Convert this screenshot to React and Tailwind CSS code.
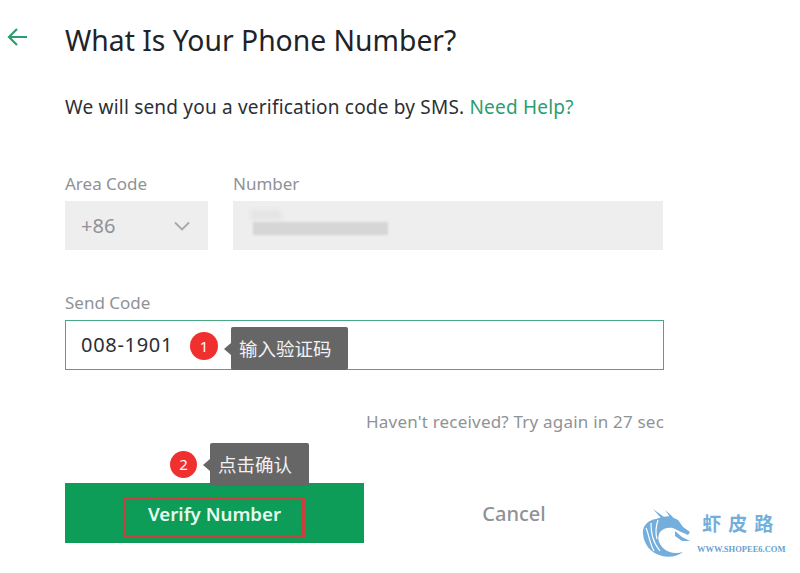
const font = { fontFamily: '"Noto Sans", "Noto Sans CJK SC", sans-serif' };

function Dragon() {
  return (
    <svg width="50" height="50" viewBox="0 0 50 50" className="shrink-0">
      <g fill="#74aedc">
        <path d="M14 11 C6 12 0 18 1 26 C2 36 8 45 20 48 C28 50 36 48 41 44 C34 46 26 45 21 40 C16 35 15 29 18 24 C21 20 27 19 31 20 L37 23 L46 27 L48 24 L41 19 L36 12 L28 8 L20 9 Z" />
        <path d="M11 1 L22 9 L19 10 Z" />
        <path d="M23 2 L31 9 L28 9 Z" />
        <path d="M33 23 L40 29 L48 33 L40 33 L33 28 Z" />
      </g>
      <g fill="none" stroke="#ffffff" strokeWidth="1.2">
        <path d="M4 20 C7 26 7 34 12 43" />
        <path d="M9 15 C9 24 10 33 18 43" />
        <path d="M16 12 C14 18 13 24 15 31" />
      </g>
    </svg>
  );
}

function Tip({ width, children }) {
  return (
    <div className="flex items-center ml-[6px]">
      <span className="w-0 h-0 border-y-[6px] border-y-transparent border-r-[7px] border-r-[#666666]" />
      <div className={`${width} h-[43px] rounded-[2px] bg-[#666666] text-[#f2f2f2] text-[18.5px] tracking-normal flex items-center pl-[8px]`}>
        {children}
      </div>
    </div>
  );
}

export default function App() {
  return (
    <div style={font} className="relative w-[800px] h-[573px] overflow-hidden bg-white flex gap-[36px] pl-[7px] pt-[20px]">
      <svg width="22" height="20" viewBox="0 0 22 20" fill="none" stroke="#2c9d70" strokeWidth="2.2" className="mt-[7px] shrink-0">
        <path d="M20 10H2M10 2l-8 8 8 8" />
      </svg>

      <div className="w-[599px] flex flex-col">
        <h1 className="text-[28.3px] leading-[40px] text-[#1e2329] font-normal whitespace-nowrap">What Is Your Phone Number?</h1>

        <p className="mt-[33px] text-[19px] tracking-[0.2px] leading-[28px] text-[#2b2f36] whitespace-nowrap">
          We will send you a verification code by SMS. <span className="text-[#2c9d70]">Need Help?</span>
        </p>

        <div className="mt-[51px] flex gap-[25px]">
          <div className="w-[143px]">
            <div className="text-[17px] leading-[24px] text-[#8f9296] mb-[5px]">Area Code</div>
            <div className="h-[49px] bg-[#eeeeee] flex items-center justify-between pl-[16px] pr-[18px]">
              <span className="text-[20px] text-[#8f9296]">+86</span>
              <svg width="16" height="10" viewBox="0 0 16 10" fill="none" stroke="#a6a8aa" strokeWidth="1.8">
                <path d="M1 1.5l7 7 7-7" />
              </svg>
            </div>
          </div>
          <div className="w-[430px]">
            <div className="text-[17px] leading-[24px] text-[#8f9296] mb-[5px]">Number</div>
            <div className="h-[49px] bg-[#eeeeee] flex flex-col items-start pl-[18px] pt-[9px] gap-[2px]">
              <div className="w-[30px] h-[10px] bg-[#e4e4e4] blur-[2px]" />
              <div className="ml-[2px] w-[135px] h-[13px] bg-[#d6d6d6] blur-[1px]" />
            </div>
          </div>
        </div>

        <div className="mt-[41px] text-[17px] leading-[24px] text-[#8f9296] mb-[5px]">Send Code</div>
        <div className="relative h-[50px] border border-[#46a984] flex items-center pl-[15px] text-[20px] tracking-[0.7px] text-[#2b2f36]">
          008-1901
          <div className="absolute left-[124px] top-[6px] flex items-center">
            <div className="w-[28px] h-[28px] mb-[5px] rounded-full bg-[#f0302f] text-white text-[15px] tracking-normal flex items-center justify-center">1</div>
            <Tip width="w-[117px]">输入验证码</Tip>
          </div>
        </div>

        <div className="mt-[40px] text-right text-[17px] tracking-[0.2px] leading-[24px] text-[#8f9296] whitespace-nowrap">Haven't received? Try again in 27 sec</div>

        <div className="relative mt-[49px] h-[60px] flex">
          <div className="absolute left-[105px] -top-[40px] flex items-center">
            <div className="w-[27px] h-[27px] rounded-full bg-[#f0302f] text-white text-[15px] flex items-center justify-center">2</div>
            <Tip width="w-[99px]">点击确认</Tip>
          </div>
          <div className="w-[299px] bg-[#0d9d58] flex items-center justify-center pt-[2px] text-[18.7px] font-semibold text-[#e6fbf0]">Verify Number</div>
          <div className="absolute left-[58px] top-[14px] w-[182px] h-[41px] border-[3px] border-[#c8413c]" />
          <div className="flex-1 flex items-center justify-center pt-[2px] text-[20px] font-medium text-[#8f9296]">Cancel</div>
        </div>
      </div>

      <div className="absolute left-[642px] top-[508px] flex items-center gap-[5px]">
        <Dragon />
        <div className="flex flex-col items-center">
          <div className="text-[19px] leading-[26px] font-semibold tracking-[7px] text-[#74aedc]">虾皮路</div>
          <div className="text-[8.5px] leading-[12px] font-bold text-[#6a9fd0] mt-[6px] whitespace-nowrap" style={{ fontFamily: '"Liberation Serif", serif' }}>WWW.SHOPEE6.COM</div>
        </div>
      </div>
    </div>
  );
}
